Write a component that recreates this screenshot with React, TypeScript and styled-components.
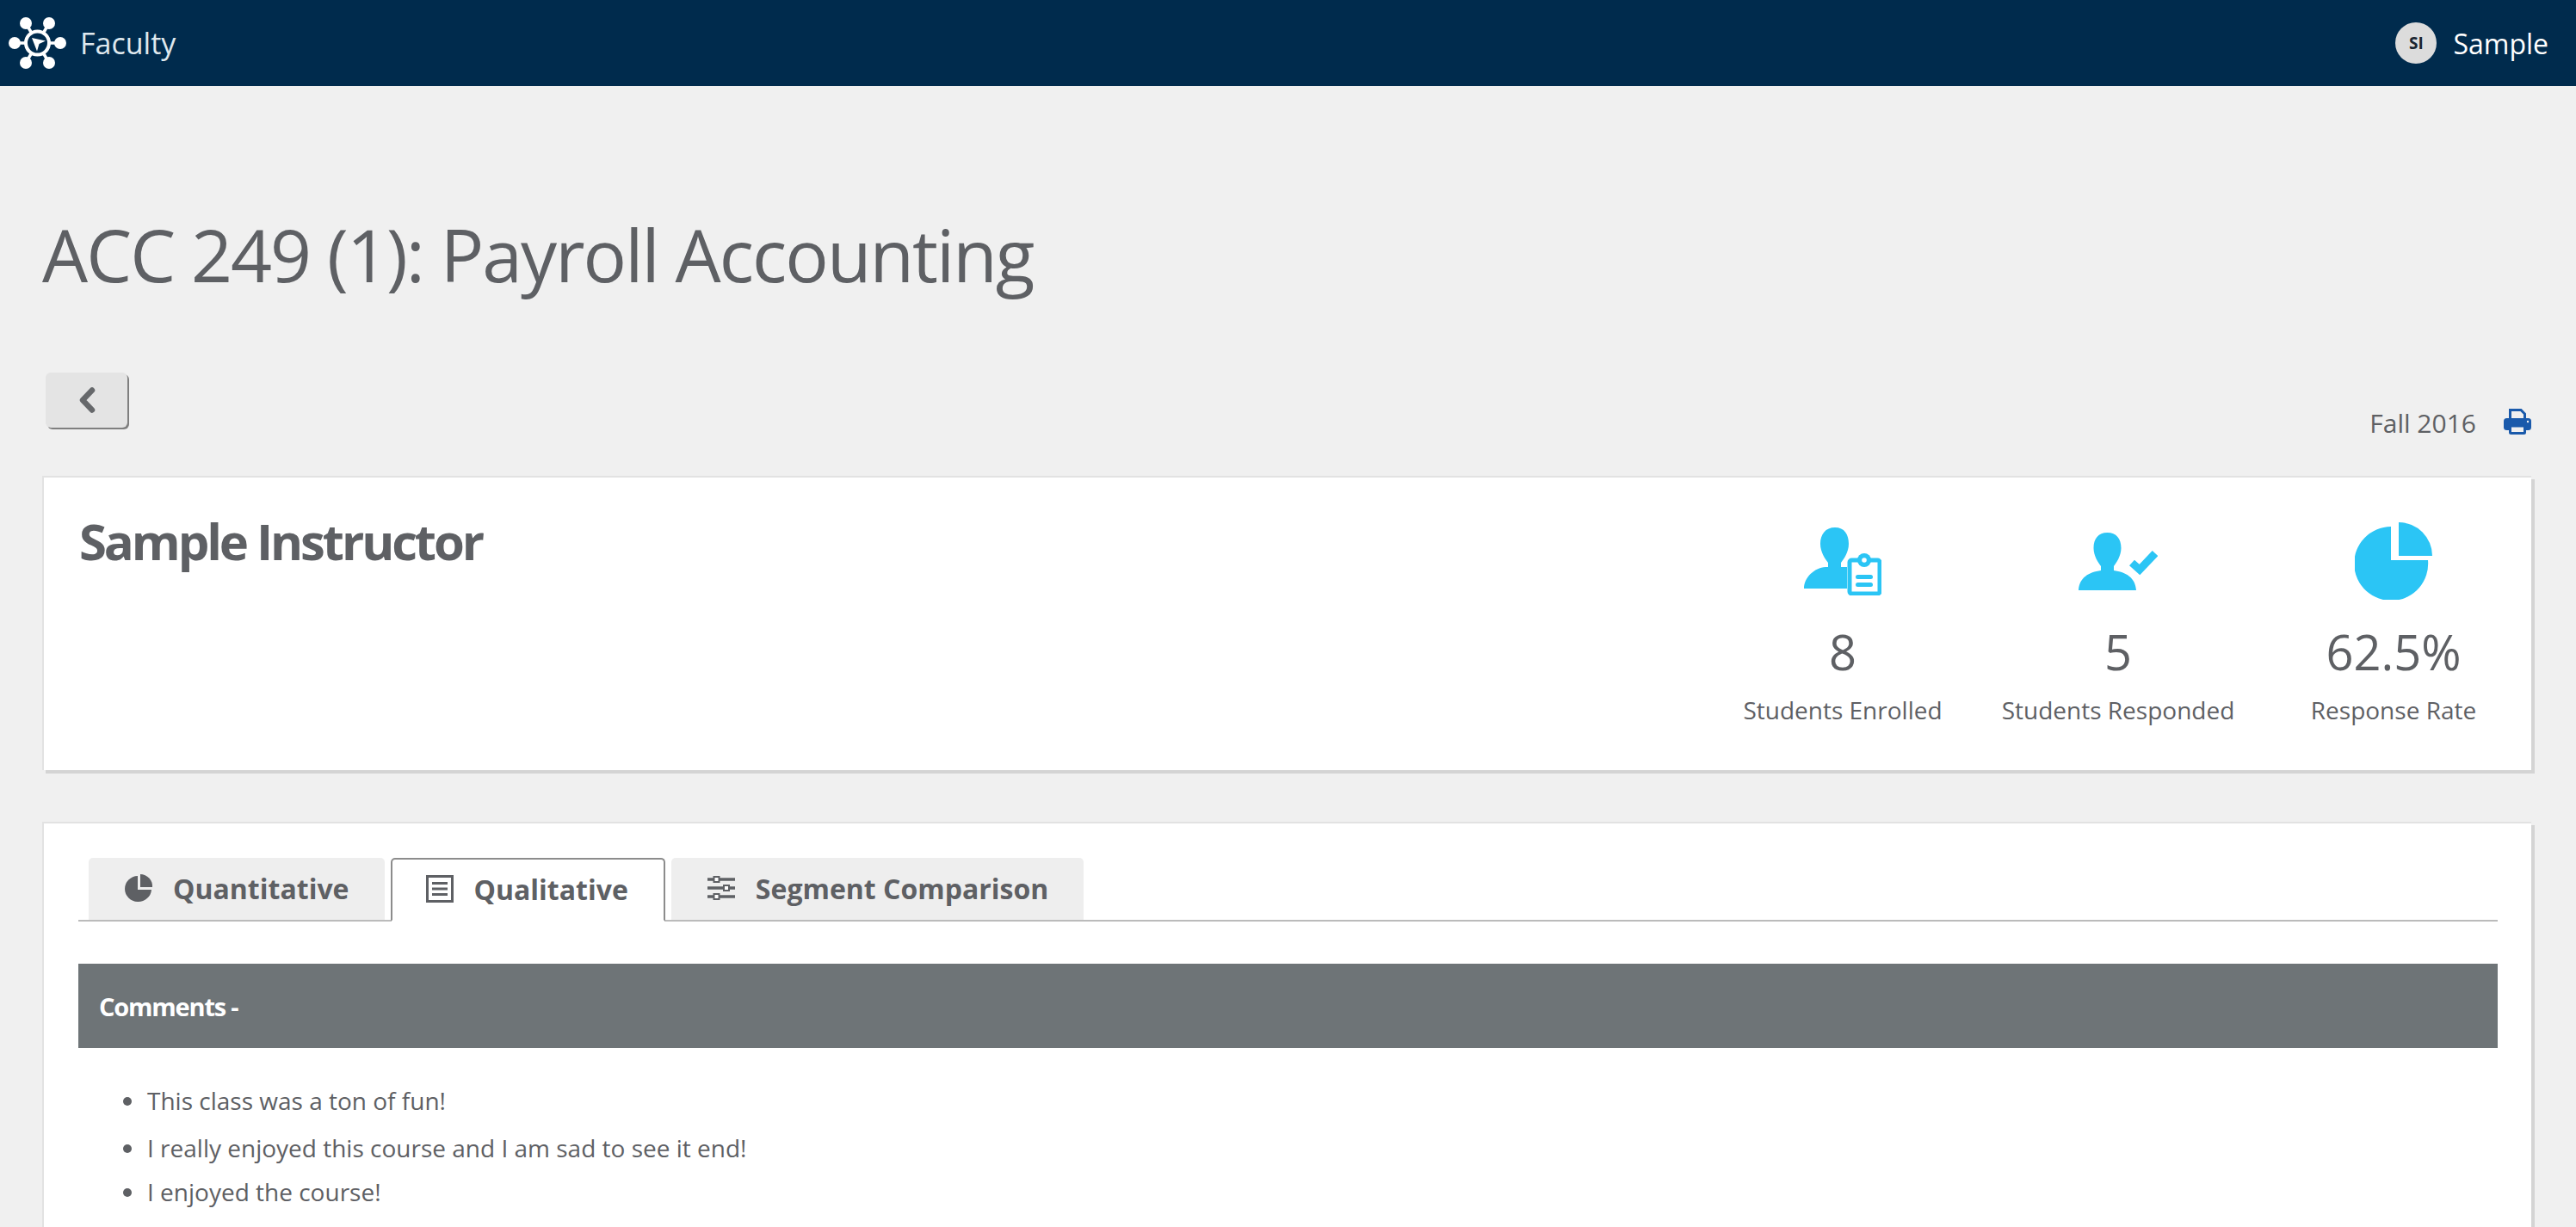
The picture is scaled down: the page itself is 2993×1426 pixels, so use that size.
import React from "react";
import styled, { createGlobalStyle } from "styled-components";

const Global = createGlobalStyle`
  html, body { margin: 0; padding: 0; background: #f0f0f0; }
  body { font-family: "Open Sans", "Liberation Sans", sans-serif; color: #5e6064; }
`;
const Page = styled.div`height: 1426px; overflow: hidden; background: #f0f0f0;`;
const NavBar = styled.header`
  height: 100px; background: #002b4d; display: flex; align-items: center; justify-content: space-between;
  padding: 0 32px 0 10px; color: #fff; font-size: 32px;
`;
const Brand = styled.div`display: flex; align-items: center; gap: 15px; color: #dfe8ee; font-size: 34px; svg { display: block; }`;
const User = styled.div`display: flex; align-items: center; gap: 19px;`;
const Avatar = styled.div`
  width: 48px; height: 48px; border-radius: 50%; background: #dcdcdc; color: #1a2530;
  display: flex; align-items: center; justify-content: center; font-size: 19px; font-weight: 700;
`;
const Main = styled.main`padding: 0 52px 0 49px;`;
const Title = styled.h1`
  margin: 0; padding-top: 135px; padding-bottom: 2px; font-size: 84px; line-height: 122px; font-weight: 400; letter-spacing: -1.95px; color: #5e6064;
`;
const ActionRow = styled.div`
  display: flex; justify-content: space-between; align-items: flex-end; margin-top: 74px; height: 120px; padding-bottom: 42px; box-sizing: border-box;
`;
const BackButton = styled.button`
  width: 95px; height: 64px; margin: 0 0 6px 4px; align-self: flex-start; border: 0; border-radius: 6px; padding: 0;
  background: #e4e4e4; box-shadow: 2px 2px 0 #7f7f7f; display: flex; align-items: center; justify-content: center;
`;
const Term = styled.div`display: flex; align-items: center; gap: 32px; font-size: 30px; color: #5e6064; line-height: 38px; svg { margin-bottom: 4px; }`;
const Card = styled.section`
  background: #fff; border-top: 2px solid #e2e2e2; border-left: 2px solid #e2e2e2; box-shadow: 4px 4px 0 #d4d4d4;
`;
const InfoCard = styled(Card)`
  height: 342px; display: flex; justify-content: space-between; box-sizing: border-box; padding-left: 41px;
`;
const Instructor = styled.h2`
  margin: 0; padding-top: 34px; font-size: 58px; line-height: 80px; font-weight: 700; letter-spacing: -3.1px; color: #5e6064;
`;
const Stats = styled.div`display: grid; grid-template-columns: repeat(3, 320px);`;
const Stat = styled.div`display: flex; flex-direction: column; align-items: center;`;
const StatIcon = styled.div`height: 90px; margin-top: 52px; display: flex; align-items: center; justify-content: center; svg { display: block; }`;
const StatValue = styled.div`font-size: 56px; line-height: 76px; margin-top: 22px; font-weight: 400; color: #5e6064;`;
const StatLabel = styled.div`font-size: 28px; line-height: 38px; margin-top: 11px; color: #5e6064;`;
const TabsCard = styled(Card)`margin-top: 60px; padding: 40px 39px 0 40px; height: 600px;`;
const TabList = styled.div`
  display: flex; gap: 7px; padding-left: 12px; height: 72px; border-bottom: 2px solid #bbb;
`;
const Tab = styled.div<{ $active?: boolean }>`
  display: flex; align-items: center; gap: 24px; box-sizing: border-box; border-radius: 5px 5px 0 0;
  padding: 0 41px 2px ${(p) => (p.$active ? "39px" : "42px")};
  font-size: 32px; font-weight: 700; color: #5e6064; background: ${(p) => (p.$active ? "#fff" : "#eeeeee")};
  border: ${(p) => (p.$active ? "2px solid #8c8c8c" : "0")};
  border-bottom: ${(p) => (p.$active ? "2px solid #fff" : "0")};
  height: ${(p) => (p.$active ? "74px" : "72px")};
  svg { display: block; flex: none; }
`;
const SectionBar = styled.div`
  margin-top: 49px; height: 98px; background: #6e7477; color: #fff; display: flex; align-items: center; padding-left: 24px;
  font-size: 29px; font-weight: 700; letter-spacing: -1.2px;
`;
const Comments = styled.ul`margin: 0; padding: 41px 0 0 80px; list-style: none;`;
const Comment = styled.li<{ $h: number }>`
  position: relative; font-size: 28px; line-height: ${(p) => p.$h}px; color: #5e6064;
  &::before { content: ""; position: absolute; left: -28px; top: calc(50% - 4px); width: 10px; height: 10px; border-radius: 50%; background: #5e6064; }
`;

const Logo = () => (
  <svg width="68" height="60" viewBox="0 0 68 60" fill="#fff" stroke="#fff">
    <g strokeWidth="3.5">
      <line x1="33.5" y1="30" x2="20" y2="7" /><line x1="33.5" y1="30" x2="47" y2="7" />
      <line x1="33.5" y1="30" x2="7" y2="30" /><line x1="33.5" y1="30" x2="60" y2="30" />
      <line x1="33.5" y1="30" x2="20" y2="53" /><line x1="33.5" y1="30" x2="47" y2="53" />
    </g>
    <g stroke="none">
      <circle cx="20" cy="7" r="7" /><circle cx="47" cy="7" r="7" /><circle cx="7" cy="30" r="7" />
      <circle cx="60" cy="30" r="7" /><circle cx="20" cy="53" r="7" /><circle cx="47" cy="53" r="7" />
    </g>
    <circle cx="33.5" cy="30" r="13.5" fill="#002b4d" strokeWidth="4" />
    <path d="M27 24 L43 27.5 L35.5 31 L33 39.5 Z" stroke="none" />
  </svg>
);
const Chevron = () => (
  <svg width="20" height="30" viewBox="0 0 20 30"><path d="M16 3.5 L5 15 L16 26.5" fill="none" stroke="#66686b" strokeWidth="6.5" strokeLinecap="round" strokeLinejoin="round" /></svg>
);
const Printer = () => (
  <svg width="32" height="30" viewBox="0 0 32 30" fill="none" stroke="#1a5aab">
    <path d="M7.5 14 V1.5 H20 L24.5 6 V14" strokeWidth="3" fill="#f0f0f0" />
    <rect x="0" y="11" width="32" height="14" rx="3.5" fill="#1a5aab" stroke="none" />
    <rect x="7.5" y="20" width="17" height="8.5" rx="1" fill="#f0f0f0" strokeWidth="3" />
    <circle cx="28" cy="15" r="1.2" fill="#f0f0f0" stroke="none" />
  </svg>
);
const EnrolledIcon = () => (
  <svg width="90" height="79" viewBox="0 0 90 79" fill="#2bc5f5">
    <path d="M36 0 C47 0 52 8 52 19 C52 29 46 37 43 41 V46 H50 V71 H0 C0 58 12 47 25 46 L28 46 V41 C25 37 19 29 19 19 C19 8 25 0 36 0Z" />
    <rect x="53" y="38" width="35" height="39" rx="2.5" fill="#fff" stroke="#2bc5f5" strokeWidth="5" />
    <circle cx="70" cy="38" r="8" />
    <circle cx="70" cy="38" r="2.8" fill="#fff" />
    <rect x="60" y="55" width="20" height="5" rx="2.5" />
    <rect x="60" y="64" width="20" height="5" rx="2.5" />
  </svg>
);
const RespondedIcon = () => (
  <svg width="92" height="67" viewBox="0 0 92 67" fill="#2bc5f5">
    <path d="M33.5 0 C44 0 49.5 7 49.5 18 C49.5 27 44 35 41 39 V44 C55 46 66 52 67 67 H0 C1 52 12 46 26 44 V39 C23 35 17.5 27 17.5 18 C17.5 7 23 0 33.5 0Z" />
    <path d="M62 35 L71 43 L89 24" fill="none" stroke="#2bc5f5" strokeWidth="9" />
  </svg>
);
const RateIcon = () => (
  <svg width="90" height="90" viewBox="0 0 90 90" fill="#2bc5f5">
    <path d="M42 5 V44 H85 A43 43 0 1 1 42 5Z" />
    <path d="M51 0 A39 39 0 0 1 90 39 H51Z" />
  </svg>
);
const PieTab = () => (
  <svg width="32" height="32" viewBox="0 0 32 32" fill="#5e6064">
    <path d="M15 2 V18 H31 A15.5 15 0 1 1 15 2Z" />
    <path d="M18 0 A14 14 0 0 1 32 15 H18Z" />
  </svg>
);
const ListTab = () => (
  <svg width="32" height="32" viewBox="0 0 32 32" fill="#5e6064">
    <rect x="1.5" y="1.5" width="29" height="29" fill="none" stroke="#5e6064" strokeWidth="3" />
    <rect x="7" y="8" width="18" height="3" /><rect x="7" y="14.5" width="18" height="3" /><rect x="7" y="21" width="18" height="3" />
  </svg>
);
const SliderTab = () => (
  <svg width="32" height="28" viewBox="0 0 32 28" fill="#fff" stroke="#5e6064" strokeWidth="2">
    <line x1="0" y1="4" x2="32" y2="4" strokeWidth="3.5" /><line x1="0" y1="14" x2="32" y2="14" strokeWidth="3.5" /><line x1="0" y1="24" x2="32" y2="24" strokeWidth="3.5" />
    <rect x="7.5" y="1" width="6" height="6" /><rect x="19" y="11" width="6" height="6" /><rect x="7.5" y="21" width="6" height="6" />
  </svg>
);

export default function App() {
  return (
    <Page>
      <Global />
      <NavBar>
        <Brand><Logo />Faculty</Brand>
        <User><Avatar>SI</Avatar>Sample</User>
      </NavBar>
      <Main>
        <Title>ACC 249 (1): Payroll Accounting</Title>
        <ActionRow>
          <BackButton aria-label="Back"><Chevron /></BackButton>
          <Term>Fall 2016 <Printer /></Term>
        </ActionRow>
        <InfoCard>
          <Instructor>Sample Instructor</Instructor>
          <Stats>
            <Stat><StatIcon><EnrolledIcon /></StatIcon><StatValue>8</StatValue><StatLabel>Students Enrolled</StatLabel></Stat>
            <Stat><StatIcon><RespondedIcon /></StatIcon><StatValue>5</StatValue><StatLabel>Students Responded</StatLabel></Stat>
            <Stat><StatIcon><RateIcon /></StatIcon><StatValue>62.5%</StatValue><StatLabel>Response Rate</StatLabel></Stat>
          </Stats>
        </InfoCard>
        <TabsCard>
          <TabList>
            <Tab><PieTab />Quantitative</Tab>
            <Tab $active><ListTab />Qualitative</Tab>
            <Tab><SliderTab />Segment Comparison</Tab>
          </TabList>
          <SectionBar>Comments -</SectionBar>
          <Comments>
            <Comment $h={40}>This class was a ton of fun!</Comment>
            <Comment $h={70}>I really enjoyed this course and I am sad to see it end!</Comment>
            <Comment $h={32}>I enjoyed the course!</Comment>
          </Comments>
        </TabsCard>
      </Main>
    </Page>
  );
}
